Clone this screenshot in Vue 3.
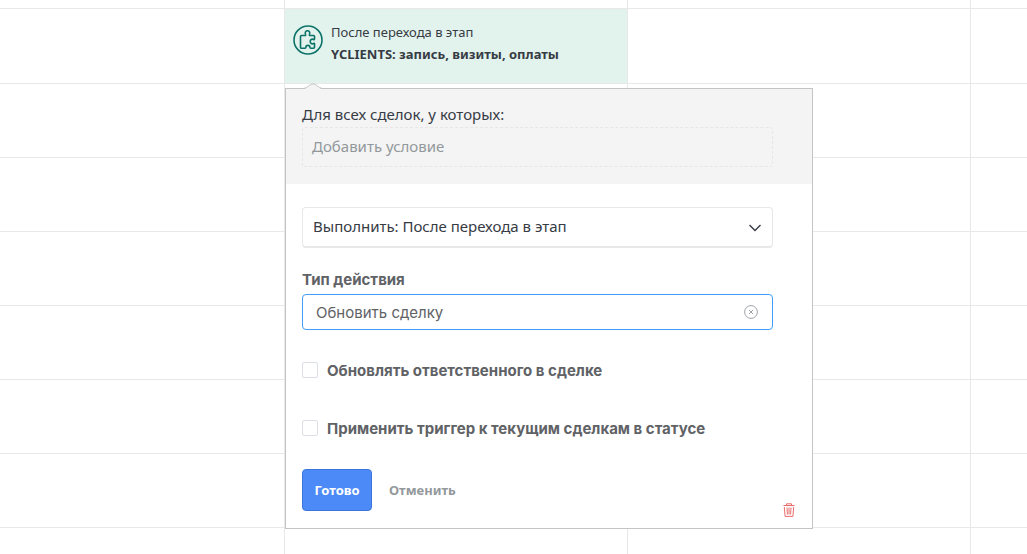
<script setup>
import { ref } from 'vue'

const rows = 9
const moment = ref('after')
const action = ref('Обновить сделку')
const updateOwner = ref(false)
const applyTrigger = ref(false)
</script>

<template>
  <main class="board">
    <template v-for="r in rows" :key="r">
      <div class="cell"></div>
      <div v-if="r === 2" class="cell trigger">
        <svg class="trigger-icon" viewBox="0 0 30 30" fill="none" stroke="#0b7268" stroke-linejoin="round" aria-hidden="true">
          <circle cx="15" cy="15" r="14" stroke-width="1.6" />
          <path stroke-width="1.6" d="M8.500 10.500h3.500c.7 0 .8-.5.500-1.200-.8-2 .2-3.500 2-3.500s2.800 1.500 2 3.500c-.3.700-.2 1.200.5 1.200h3.500c.6 0 1 .4 1 1v2.600c0 .6-.5.700-1 .4-1.700-.9-3.300.2-3.300 2s1.600 2.900 3.300 2c.5-.3 1-.2 1 .4v3.300c0 .6-.4 1-1 1h-2.700c-.7 0-.9-.4-.9-1 0-2.400-4-2.400-4 0 0 .6-.2 1-.9 1H8.500c-.6 0-1-.4-1-1V11.500c0-.6.4-1 1-1z" />
        </svg>
        <div class="trigger-text">
          <div>После перехода в этап</div>
          <strong>YCLIENTS: запись, визиты, оплаты</strong>
        </div>

        <form class="popup" @submit.prevent>
          <svg class="pointer" viewBox="0 0 18 6" aria-hidden="true">
            <path d="M0 6C4 5 6 1 9 1s5 4 9 5z" fill="#f4f4f4" />
            <path d="M0 5.500C4 4.500 6 .8 9 .8s5 3.700 9 4.700" fill="none" stroke="#c4c4c4" />
          </svg>
          <section class="conditions">
            <div class="conditions-title">Для всех сделок, у которых:</div>
            <button type="button" class="add">Добавить условие</button>
          </section>
          <section class="settings">
            <div class="select-wrap">
              <select v-model="moment" class="select" aria-label="Выполнить">
                <option value="after">Выполнить: После перехода в этап</option>
              </select>
              <svg class="chevron" viewBox="0 0 12 8" fill="none" stroke="#363b44" stroke-width="1.400" aria-hidden="true">
                <path d="M.5 1 6 6.500 11.500 1" />
              </svg>
            </div>
            <label class="field-label" for="action">Тип действия</label>
            <div class="input-wrap">
              <input id="action" v-model="action" class="input" type="text" />
              <button type="button" class="clear" aria-label="Очистить" @click="action = ''">
                <svg viewBox="0 0 14 14" fill="none" stroke="#a0a2a8" aria-hidden="true">
                  <circle cx="7" cy="7" r="6.400" />
                  <path d="m5 5 4 4m0-4-4 4" />
                </svg>
              </button>
            </div>
            <label class="check"><input v-model="updateOwner" type="checkbox" /><span>Обновлять ответственного в сделке</span></label>
            <label class="check"><input v-model="applyTrigger" type="checkbox" /><span>Применить триггер к текущим сделкам в статусе</span></label>
            <div class="actions">
              <button type="submit" class="done">Готово</button>
              <button type="button" class="cancel">Отменить</button>
              <button type="button" class="remove" aria-label="Удалить">
                <svg viewBox="0 0 12 14" fill="none" stroke="#ea6b6b" aria-hidden="true">
                  <path d="M.5 2.500h11M3.500 2.500V.8h5v1.700M1.300 4l.8 9.400h7.800L10.700 4M4 4.500l.4 7M6 4.500v7M8 4.500l-.4 7" />
                </svg>
              </button>
            </div>
          </section>
        </form>
      </div>
      <div v-else class="cell"></div>
      <div class="cell"></div>
      <div class="cell last"></div>
    </template>
  </main>
</template>

<style>
body {
  margin: 0;
  background: #fff;
}
</style>

<style scoped>
.board {
  display: grid;
  grid-template-columns: 285px 343px 343px 1fr;
  grid-template-rows: 9px 75px;
  grid-auto-rows: 74px;
  height: 100vh;
  overflow: hidden;
  color: #363b44;
  font-family: "Noto Sans", "Open Sans", sans-serif;
}
.board *,
.board {
  box-sizing: border-box;
}
.cell {
  border-right: 1px solid #e8e8e8;
  border-bottom: 1px solid #e8e8e8;
}
.cell.last {
  border-right: 0;
}
.trigger {
  position: relative;
  display: flex;
  align-items: flex-start;
  gap: 8px;
  padding: 12px 8px;
  background: #e2f3ed;
}
.trigger-icon {
  width: 30px;
  height: 30px;
  margin-top: 4px;
}
.trigger-text {
  font-size: 13px;
  line-height: 22px;
}
.popup {
  position: absolute;
  z-index: 1;
  top: 79px;
  left: 0;
  width: 528px;
  border: 1px solid #c4c4c4;
  background: #fff;
}
.pointer {
  position: absolute;
  top: -6px;
  left: 18px;
  width: 18px;
  height: 6px;
}
.conditions {
  padding: 14px 39px 17px 16px;
  background: #f4f4f4;
}
.conditions-title {
  padding-bottom: 2px;
  font-size: 15px;
  line-height: 22px;
}
button,
input,
select {
  font: inherit;
}
button {
  padding: 0;
  border: 0;
  background: none;
  cursor: pointer;
}
.add {
  display: block;
  width: 100%;
  height: 40px;
  padding: 0 9px 2px;
  border: 1px dashed #e6e6e6;
  border-radius: 3px;
  color: #92989b;
  font-size: 15px;
  text-align: left;
}
.settings {
  padding: 23px 39px 17px 16px;
}
.select-wrap,
.input-wrap {
  position: relative;
}
.select {
  display: block;
  width: 100%;
  height: 41px;
  padding: 0 40px 2px 10px;
  appearance: none;
  border: 1px solid #e8e8e8;
  border-bottom-width: 2px;
  border-radius: 4px;
  background: #fff;
  color: #363b44;
  font-size: 15px;
}
.chevron {
  position: absolute;
  top: 17px;
  right: 12px;
  width: 12px;
  height: 8px;
  pointer-events: none;
}
.field-label,
.check,
.input {
  color: #606266;
  font-family: Inter, "Noto Sans", sans-serif;
  font-size: 15px;
}
.field-label {
  display: block;
  margin-top: 20px;
  padding-bottom: 2px;
  font-weight: 700;
  line-height: 24px;
}
.input {
  display: block;
  width: 100%;
  height: 36px;
  padding: 0 40px 0 13px;
  border: 1px solid #409eff;
  border-radius: 4px;
  outline: 0;
}
.clear {
  position: absolute;
  top: 11px;
  right: 15px;
  width: 14px;
  height: 14px;
}
.clear svg,
.remove svg {
  display: block;
  width: 100%;
  height: 100%;
}
.check {
  display: flex;
  align-items: center;
  gap: 9px;
  height: 24px;
  margin-top: 34px;
  font-weight: 700;
}
.input-wrap + .check {
  margin-top: 28px;
}
.check input {
  width: 16px;
  height: 16px;
  margin: 0;
  appearance: none;
  border: 1px solid #dcdfe6;
  border-radius: 2px;
  background: #fff;
}
.check input:checked {
  background: #409eff;
}
.actions {
  display: flex;
  align-items: center;
  gap: 17px;
  margin-top: 29px;
  font-size: 13px;
  font-weight: 700;
}
.done {
  width: 70px;
  height: 42px;
  border: 1px solid #3c76dc;
  border-radius: 4px;
  background: #4c8bf7;
  color: #fff;
}
.cancel {
  color: #92989b;
}
.remove {
  position: absolute;
  right: 17px;
  bottom: 11px;
  width: 12px;
  height: 14px;
}
</style>
